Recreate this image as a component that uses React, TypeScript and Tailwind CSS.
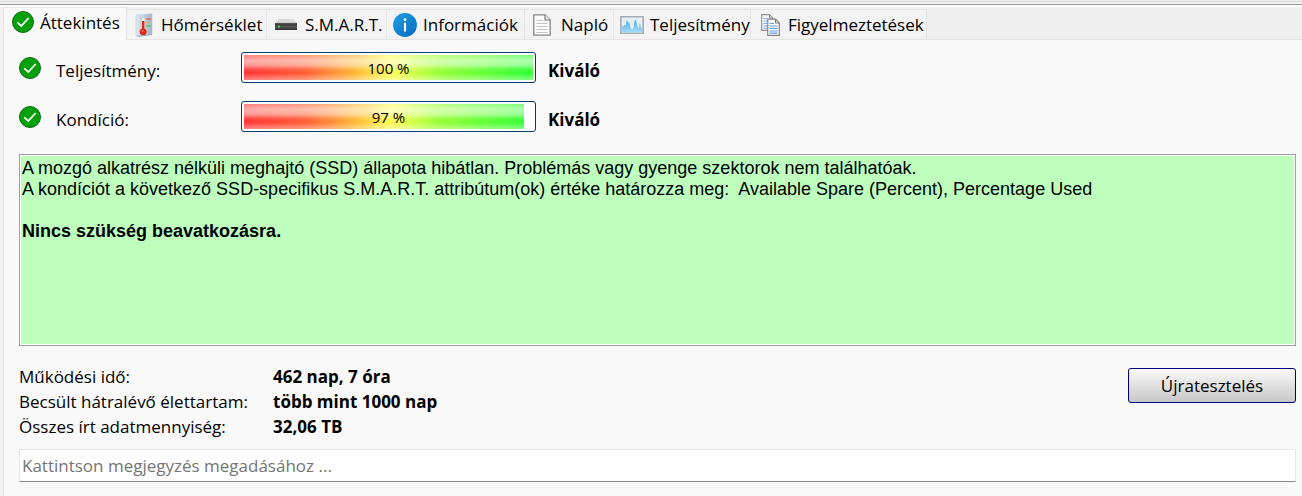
import { useState, type ReactNode } from "react";

function CheckIcon() {
  return (
    <svg viewBox="0 0 22 22" className="size-[22px] shrink-0" aria-hidden="true">
      <circle cx="11" cy="11" r="10.5" fill="#04a00c" stroke="#0d6b12" />
      <path d="M5.3 11.3 9.3 15 16.7 7" fill="none" stroke="#fff" strokeWidth="1.8" />
    </svg>
  );
}

function ThermometerIcon() {
  return (
    <svg viewBox="0 0 18 24" className="h-6 w-[18px] shrink-0" aria-hidden="true">
      <defs>
        <linearGradient id="thermo" x1="0" x2="1">
          <stop offset="0" stopColor="#dfe8ef" />
          <stop offset="1" stopColor="#a3b5c8" />
        </linearGradient>
      </defs>
      <path d="M1 2 17 .8V21L1 23Z" fill="url(#thermo)" stroke="#b9c5d0" strokeWidth=".5" />
      <path d="M1 23 17 21V22L4 23.7Z" fill="#93a4b5" />
      <path d="M6.2 6.5a2 2 0 0 1 4 0V15a4 4 0 1 1-4 0Z" fill="#f4f5f6" stroke="#b9aeb0" strokeWidth=".6" />
      <path d="M7 8h2.4v7.5a3.5 3.5 0 1 1-2.4 0Z" fill="#d6291d" />
      <circle cx="7.5" cy="18" r="1.1" fill="#f47b6c" />
      <path d="M11.5 6H15.5" stroke="#e25a4c" strokeWidth="1.4" />
      <path d="M11.5 9.5H15.5" stroke="#d6ad62" strokeWidth="1.4" />
      <path d="M11.5 13H15.5" stroke="#4fd060" strokeWidth="1.6" />
    </svg>
  );
}

function DriveIcon() {
  return (
    <svg viewBox="0 0 22 13" className="h-[13px] w-[22px] shrink-0" aria-hidden="true">
      <defs>
        <linearGradient id="drive" x1="0" y1="0" x2="0" y2="1">
          <stop offset="0" stopColor="#2c2c2c" />
          <stop offset=".55" stopColor="#555" />
          <stop offset="1" stopColor="#303030" />
        </linearGradient>
      </defs>
      <path d="M4 1h14l4 4H0Z" fill="#d7d9da" />
      <path d="M0 5h22v7H0Z" fill="url(#drive)" />
      <path d="M0 5.3h22" stroke="#777" strokeWidth=".6" />
      <path d="M3 7.5h2v2H3Z" fill="#22e33c" />
    </svg>
  );
}

function InfoIcon() {
  return (
    <svg viewBox="0 0 24 24" className="size-6 shrink-0" aria-hidden="true">
      <defs>
        <linearGradient id="info" x1="0" y1="0" x2="1" y2="1">
          <stop offset="0" stopColor="#22a0e6" />
          <stop offset="1" stopColor="#0568bd" />
        </linearGradient>
      </defs>
      <circle cx="12" cy="12" r="11.9" fill="url(#info)" />
      <circle cx="12" cy="6.7" r="1.4" fill="#fff" />
      <path d="M12 9.7V18.5" stroke="#fff" strokeWidth="2.2" />
    </svg>
  );
}

function DocumentIcon() {
  return (
    <svg viewBox="0 0 18 22" className="h-[22px] w-[18px] shrink-0" aria-hidden="true">
      <path d="M.8.8H12L17.2 6V21.2H.8Z" fill="#fbfbfb" stroke="#858585" strokeWidth="1.3" />
      <path d="M12 .8V6h5.2" fill="#eee" stroke="#777" strokeWidth="1.2" />
      <path d="M3.5 6.5H10M3.5 9.5h11M3.5 12.5h11M3.5 15.5h11M3.5 18.5h11" stroke="#c2c2c2" />
    </svg>
  );
}

function ChartIcon() {
  return (
    <svg viewBox="0 0 24 18" className="h-[18px] w-6 shrink-0" aria-hidden="true">
      <defs>
        <linearGradient id="chart" x1="0" y1="0" x2="0" y2="1">
          <stop offset="0" stopColor="#4fa9dc" />
          <stop offset="1" stopColor="#a4dcfa" />
        </linearGradient>
      </defs>
      <path d="M.8.8H23.2V17.2H.8Z" fill="#e4f0f8" stroke="#a4adb4" strokeWidth="1.6" />
      <path
        d="M1.8 8 3 11 4.3 9 5.5 9.5 7 4 8.2 7 9.3 6 10.5 12 12 13.5 13.5 12 14.6 5 16 3.5 17 9 18.7 13 19.8 7 20.8 11 22.2 12.5V16.2H1.8Z"
        fill="url(#chart)"
      />
    </svg>
  );
}

function CopyIcon() {
  return (
    <svg viewBox="0 0 19 22" className="h-[22px] w-[19px] shrink-0" aria-hidden="true">
      <path d="M.7.7H8.5L12 4.2V16.3H.7Z" fill="#f5f7fa" stroke="#939393" strokeWidth="1.2" />
      <path d="M8.5.7V4.2H12" fill="none" stroke="#858585" />
      <path d="M2.5 4.5H6M2.5 7h4M2.5 9.5h4M2.5 12h4M2.5 14.2h4" stroke="#80b1ee" strokeWidth="1.1" />
      <path d="M6.7 5.2h7.8l3.8 3.8V21.3H6.7Z" fill="#f8fafc" stroke="#858585" strokeWidth="1.2" />
      <path d="M14.5 5.2V9h3.8" fill="none" stroke="#777" />
      <path d="M8.5 9.5H13M8.5 12h8M8.5 14.5h8M8.5 17h8M8.5 19.2h8" stroke="#639df0" strokeWidth="1.2" />
    </svg>
  );
}

type Tab = { label: string; icon: ReactNode; layout: string };

const tabs: Tab[] = [
  { label: "Áttekintés", icon: <CheckIcon />, layout: "w-[124px] gap-1.5 pl-2" },
  { label: "Hőmérséklet", icon: <ThermometerIcon />, layout: "w-[140px] gap-2 pl-2" },
  { label: "S.M.A.R.T.", icon: <DriveIcon />, layout: "w-[120px] gap-2 pl-2" },
  { label: "Információk", icon: <InfoIcon />, layout: "w-[138px] gap-1.5 pl-1.5" },
  { label: "Napló", icon: <DocumentIcon />, layout: "w-[89px] gap-2.5 pl-2" },
  { label: "Teljesítmény", icon: <ChartIcon />, layout: "w-[137px] gap-1.5 pl-1.5" },
  { label: "Figyelmeztetések", icon: <CopyIcon />, layout: "w-[176px] gap-2 pl-2.5" },
];

function Meter({ label, value, rating }: { label: string; value: number; rating: string }) {
  return (
    <div className="flex h-[31px] items-center">
      <CheckIcon />
      <span className="w-[200px] pt-1.5 pl-[15px]">{label}:</span>
      <div
        role="progressbar"
        aria-label={label}
        aria-valuenow={value}
        aria-valuemin={0}
        aria-valuemax={100}
        className="grid h-full w-[295px] rounded-[3px] border border-[#003c74] bg-white p-0.5"
      >
        <div
          className="col-start-1 row-start-1 bg-[linear-gradient(to_bottom,rgba(255,255,255,.38)_0%,rgba(255,255,255,.6)_22%,rgba(255,255,255,.5)_40%,rgba(255,255,255,.08)_60%,rgba(255,255,255,0)_72%,rgba(255,255,255,.4)_100%),linear-gradient(to_right,#ff3232_0px,#ff5a32_60px,#ffb432_110px,#ffff50_148px,#96ff32_195px,#32ff32_280px)]"
          style={{ width: `${value}%` }}
        />
        <span className="col-start-1 row-start-1 self-center text-center text-[15px] leading-5">{value} %</span>
      </div>
      <strong className="pt-1.5 pl-3">{rating}</strong>
    </div>
  );
}

const stats = [
  ["Működési idő:", "462 nap, 7 óra"],
  ["Becsült hátralévő élettartam:", "több mint 1000 nap"],
  ["Összes írt adatmennyiség:", "32,06 TB"],
];

export default function App() {
  const [active, setActive] = useState(0);
  return (
    <div className="flex min-h-screen flex-col bg-[#f0f0f0] font-['Open_Sans','Noto_Sans',sans-serif] text-[17px] leading-6 text-black">
      <div className="h-[5px] border-b border-[#a0a0a0] bg-[#f0f0f0] pt-px">
        <div className="h-px bg-[#dcdcdc]" />
      </div>
      <div className="h-0.5 bg-white" />
      <div role="tablist" className="ml-[3px] flex h-[33px] items-end border-b border-[#e5e5e5]">
        {tabs.map((tab, i) => (
          <button
            key={tab.label}
            type="button"
            role="tab"
            aria-selected={active === i}
            onClick={() => setActive(i)}
            className={`flex shrink-0 items-center border-t border-r border-[#e5e5e5] whitespace-nowrap ${tab.layout} ${
              active === i ? "-mb-px h-[33px] border-l bg-[#f9f9f9] pb-1" : "h-[30px] bg-[#f3f3f3]"
            }`}
          >
            {tab.icon}
            <span className={active === i ? "pt-0.5" : ""}>{tab.label}</span>
          </button>
        ))}
      </div>
      <main className="ml-[3px] flex flex-1 flex-col border-l border-[#e5e5e5] bg-[#f9f9f9] pt-3 pr-1.5 pb-3.5 pl-[15px]">
        <div className="flex flex-col gap-[18px]">
          <Meter label="Teljesítmény" value={100} rating="Kiváló" />
          <Meter label="Kondíció" value={97} rating="Kiváló" />
        </div>
        <section className="mt-[22px] flex min-h-[120px] flex-1 border border-[#a0a0a0] bg-white p-px">
          <div className="flex-1 bg-[#beffbe] px-px pt-0.5 font-['Liberation_Sans',Arial,sans-serif] text-[18px] leading-[21px]">
            <p>A mozgó alkatrész nélküli meghajtó (SSD) állapota hibátlan. Problémás vagy gyenge szektorok nem találhatóak.</p>
            <p className="whitespace-pre-wrap">
              {"A kondíciót a következő SSD-specifikus S.M.A.R.T. attribútum(ok) értéke határozza meg:  Available Spare (Percent), Percentage Used"}
            </p>
            <p className="mt-[21px] font-bold">Nincs szükség beavatkozásra.</p>
          </div>
        </section>
        <div className="mt-[18px] flex items-start justify-between">
          <dl className="grid grid-cols-[254px_auto] leading-[25px]">
            {stats.map(([name, value]) => (
              <div key={name} className="col-span-2 grid grid-cols-subgrid">
                <dt>{name}</dt>
                <dd className="font-bold">{value}</dd>
              </div>
            ))}
          </dl>
          <button
            type="button"
            className="mt-1 h-[35px] w-[168px] rounded-[3px] border border-[#000080] bg-linear-to-b from-[#fafafa] to-[#c8c8c8]"
          >
            Újratesztelés
          </button>
        </div>
        <input
          type="text"
          aria-label="Megjegyzés"
          placeholder="Kattintson megjegyzés megadásához ..."
          className="mt-2.5 h-[33px] w-full border border-[#e5e5e5] border-b-[#868686] bg-white px-0.5 outline-none placeholder:text-[#757575]"
        />
      </main>
    </div>
  );
}
